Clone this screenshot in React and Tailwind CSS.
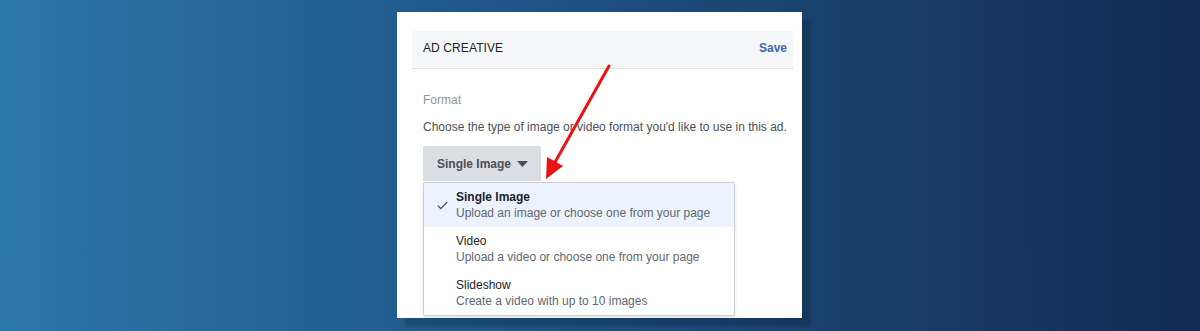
export default function App() {
  const options = [
    { title: 'Single Image', desc: 'Upload an image or choose one from your page', selected: true },
    { title: 'Video', desc: 'Upload a video or choose one from your page' },
    { title: 'Slideshow', desc: 'Create a video with up to 10 images' },
  ]

  return (
    <div
      className="relative w-[1200px] h-[331px] overflow-hidden bg-gradient-to-r from-[#2a78a9] via-[#1d4f80] to-[#132a52] pt-[12px]"
      style={{ fontFamily: '"Liberation Sans", Arial, sans-serif' }}
    >
      <div className="ml-[397px] w-[405px] h-[306px] bg-white shadow-[8px_8px_3px_rgba(0,0,0,0.18)] pl-[15px] pr-[9px] pt-[19px] overflow-hidden">
        {/* header */}
        <div className="h-[38px] bg-[#f5f6f7] border-b border-[#dddfe2] flex items-center justify-between pl-[11px] pr-[6px] pb-[4px]">
          <span className="text-[12px] text-[#1d2129] tracking-[0.1px]">AD CREATIVE</span>
          <span className="text-[12px] font-bold text-[#4267b2]">Save</span>
        </div>

        <div className="pl-[11px]">
          <div className="mt-[24px] text-[12px] leading-[15px] text-[#90949c]">Format</div>
          <div className="mt-[12px] text-[12px] leading-[15px] text-[#4b4f56]">
            Choose the type of image or video format you'd like to use in this ad.
          </div>

          <button className="mt-[11px] h-[35px] w-[118px] bg-[#dadde1] flex items-center pl-[14px] gap-[6px] text-[12px] font-bold text-[#4b4f56]">
            Single Image
            <svg width="11" height="6" viewBox="0 0 11 6">
              <path d="M0 0h11L5.5 6z" fill="#4b4f56" />
            </svg>
          </button>

          {/* dropdown menu */}
          <div className="mt-[1px] w-[312px] bg-white border border-[#ccd0d5] rounded-[2px] shadow-[0_2px_4px_rgba(0,0,0,0.12)]">
            {options.map(opt => (
              <div
                key={opt.title}
                className={`flex items-center h-[44px] ${opt.selected ? 'bg-[#ecf3ff]' : ''}`}
              >
                <div className="w-[32px] flex justify-center pl-[4px]">
                  {opt.selected && (
                    <svg width="11" height="9" viewBox="0 0 11 9">
                      <path d="M0.8 4.6l3 3L10.2 1" fill="none" stroke="#4b4f56" strokeWidth="1.3" />
                    </svg>
                  )}
                </div>
                <div className="flex flex-col leading-[16px] text-[12px]">
                  <span className={`text-[#1d2129] ${opt.selected ? 'font-bold' : ''}`}>{opt.title}</span>
                  <span className="text-[#606770]">{opt.desc}</span>
                </div>
              </div>
            ))}
          </div>
        </div>
      </div>

      {/* red annotation arrow */}
      <svg className="absolute left-0 top-0 pointer-events-none" width="1200" height="331">
        <line x1="609" y1="66" x2="554" y2="164" stroke="#ee1111" strokeWidth="3" strokeLinecap="round" />
        <path d="M546 179L547 157L563 166z" fill="#ee1111" />
      </svg>
    </div>
  )
}
